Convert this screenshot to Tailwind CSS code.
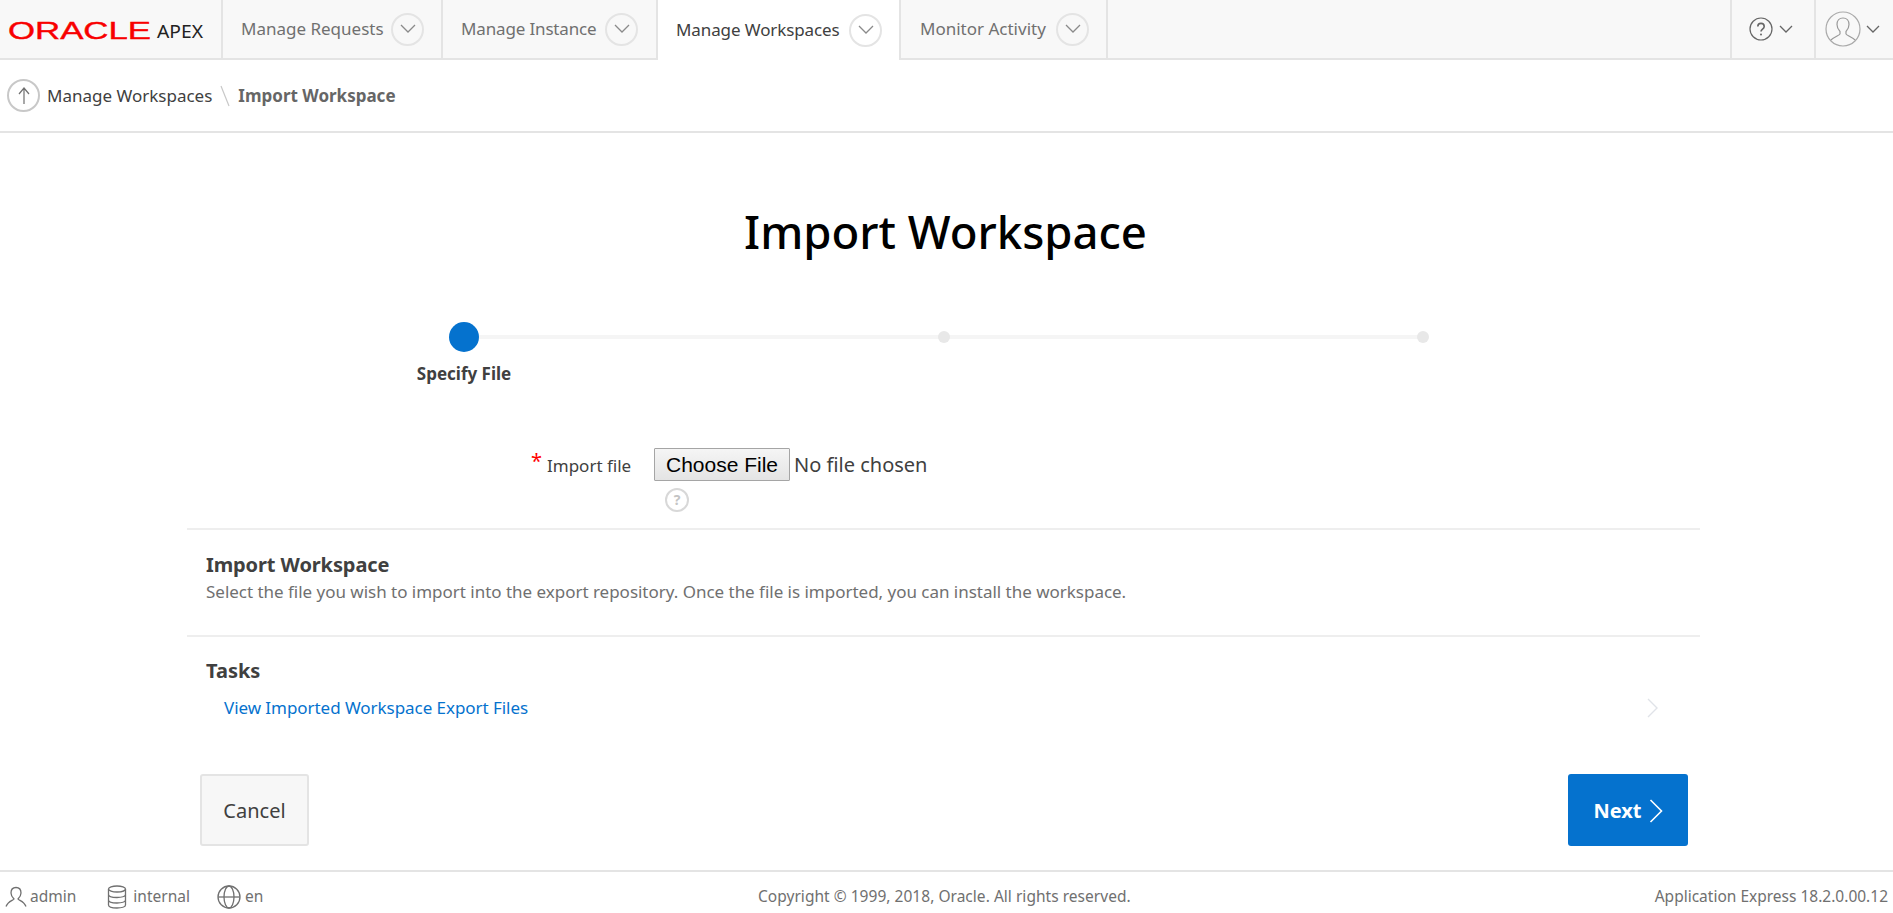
<!DOCTYPE html>
<html lang="en">
<head>
<meta charset="utf-8">
<title>Import Workspace</title>
<script src="https://cdn.jsdelivr.net/npm/@tailwindcss/browser@4"></script>
</head>
<body class="bg-white font-['Noto_Sans',sans-serif] text-[#404040] overflow-hidden">
<div class="flex flex-col h-[913px] w-[1893px]">
  <header class="flex h-[60px] shrink-0 bg-[#f8f8f8] border-b-2 border-[#e4e4e4]">
    <div class="w-[223px] h-[58px] flex items-center border-r-2 border-[#e4e4e4] pl-[8px]">
      <svg width="200" height="30" viewBox="0 0 200 30">
        <text x="0" y="25" font-family="Liberation Sans" font-size="24" fill="#f80000" stroke="#f80000" stroke-width="0.4" textLength="143" lengthAdjust="spacingAndGlyphs">ORACLE</text>
        <text x="149" y="24" font-family="Noto Sans" font-size="18" fill="#222" textLength="46" lengthAdjust="spacingAndGlyphs">APEX</text>
      </svg>
    </div>
    <div class="w-[220px] flex items-center justify-between pl-[18px] pr-[17px] border-r-2 border-[#e4e4e4] text-[#707070] text-[17px]">
      <span>Manage Requests</span>
      <span class="w-[33px] h-[33px] rounded-full border-2 border-[#e4e4e4] flex items-center justify-center"><svg width="16" height="10" viewBox="0 0 16 10" fill="none" stroke="#8a8a8a" stroke-width="1.3"><path d="M1 1l7 7 7-7"/></svg></span>
    </div>
    <div class="w-[213px] flex items-center justify-between pl-[18px] pr-[18px] text-[#707070] text-[17px]">
      <span class="tracking-[-0.15px]">Manage Instance</span>
      <span class="w-[33px] h-[33px] rounded-full border-2 border-[#e4e4e4] flex items-center justify-center"><svg width="16" height="10" viewBox="0 0 16 10" fill="none" stroke="#8a8a8a" stroke-width="1.3"><path d="M1 1l7 7 7-7"/></svg></span>
    </div>
    <div class="w-[245px] h-[60px] bg-white flex items-center justify-between pl-[18px] pr-[17px] border-l-2 border-r-2 border-[#e4e4e4] text-[#404040] text-[17px]">
      <span class="tracking-[-0.1px]">Manage Workspaces</span>
      <span class="w-[33px] h-[33px] rounded-full border-2 border-[#e4e4e4] flex items-center justify-center"><svg width="16" height="10" viewBox="0 0 16 10" fill="none" stroke="#8a8a8a" stroke-width="1.3"><path d="M1 1l7 7 7-7"/></svg></span>
    </div>
    <div class="w-[207px] flex items-center justify-between pl-[19px] pr-[17px] border-r-2 border-[#e4e4e4] text-[#707070] text-[17px]">
      <span>Monitor Activity</span>
      <span class="w-[33px] h-[33px] rounded-full border-2 border-[#e4e4e4] flex items-center justify-center"><svg width="16" height="10" viewBox="0 0 16 10" fill="none" stroke="#8a8a8a" stroke-width="1.3"><path d="M1 1l7 7 7-7"/></svg></span>
    </div>
    <div class="flex-1"></div>
    <div class="w-[86px] flex items-center justify-center gap-[6px] border-l-2 border-r-2 border-[#e4e4e4] pr-[5px]">
      <svg width="24" height="24" viewBox="0 0 24 24" fill="none" stroke="#666" stroke-width="1.2"><circle cx="12" cy="12" r="11"/><path d="M8.800 9.500c0-4.200 6.400-4.200 6.400 0 0 2.600-3.200 2.600-3.200 5" stroke-width="1.600"/><circle cx="12" cy="17.600" r="1" fill="#666" stroke="none"/></svg>
      <svg width="14" height="8" viewBox="0 0 14 8" fill="none" stroke="#666" stroke-width="1.3"><path d="M1 1l6 6 6-6"/></svg>
    </div>
    <div class="w-[77px] flex items-center pl-[9px] gap-[5px]">
      <svg width="36" height="36" viewBox="0 0 36 36" fill="none" stroke="#aaa" stroke-width="1.2"><circle cx="18" cy="18" r="17"/><path d="M18 7c-4 0-6 3-6 6.500 0 3 1.500 5.500 3 7v2.500c0 1-6 3-9 6M18 7c4 0 6 3 6 6.500 0 3-1.500 5.500-3 7v2.500c0 1 6 3 9 6" stroke="#999"/></svg>
      <svg width="14" height="8" viewBox="0 0 14 8" fill="none" stroke="#666" stroke-width="1.3"><path d="M1 1l6 6 6-6"/></svg>
    </div>
  </header>

  <nav class="h-[73px] shrink-0 flex items-center pl-[7px] border-b-2 border-[#e4e4e4] text-[17px]">
    <span class="w-[33px] h-[33px] rounded-full border-2 border-[#c8c8c8] flex items-center justify-center"><svg width="12" height="18" viewBox="0 0 12 18" fill="none" stroke="#707070" stroke-width="1.2"><path d="M6 17V1M1 7l5-6 5 6"/></svg></span>
    <span class="ml-[7px] mt-[1px] text-[#404040]">Manage Workspaces</span>
    <svg class="mx-[8px]" width="10" height="22" viewBox="0 0 10 22" fill="none" stroke="#c8c8c8" stroke-width="1.2"><path d="M1 1l8 20"/></svg>
    <span class="mt-[1px] font-bold text-[#666]">Import Workspace</span>
  </nav>

  <main class="flex-1 flex flex-col min-h-0">
    <h1 class="mt-[64px] pr-[2px] text-center text-[#000] text-[45.5px] leading-[68px] font-medium">Import Workspace</h1>

    <div class="mt-[57px] ml-[399px] w-[1090px] relative h-[66px]">
      <div class="absolute left-[64px] right-[66px] top-[13px] h-[4px] bg-[#f5f5f5]"></div>
      <div class="absolute left-[50px] top-0 w-[30px] h-[30px] rounded-full bg-[#0572ce]"></div>
      <div class="absolute left-[539px] top-[9px] w-[12px] h-[12px] rounded-full bg-[#e8e8e8]"></div>
      <div class="absolute left-[1018px] top-[9px] w-[12px] h-[12px] rounded-full bg-[#e8e8e8]"></div>
      <div class="absolute left-[0px] top-[39px] w-[130px] text-center text-[17px] font-bold text-[#404040]">Specify File</div>
    </div>

    <div class="mt-[60px] flex items-start pl-[530px]">
      <label class="relative text-[#404040] text-[17px] w-[124px] pt-[5px] pl-[17px]"><span class="absolute left-[1px] top-[1px] text-[#f00] text-[20px] leading-[24px]">*</span>Import file</label>
      <div class="flex flex-col items-start">
        <input type="file" class="w-[320px] h-[33px] text-[20px] text-[#404040] file:h-[33px] file:w-[136px] file:mr-[4px] file:px-0 file:border file:border-solid file:border-[#a5a5a5] file:rounded-[1px] file:bg-[linear-gradient(#f5f5f5,#e4e4e4)] file:text-[#000] file:text-[21px] file:font-['Liberation_Sans',sans-serif]">
        <span class="mt-[7px] ml-[11px] w-[24px] h-[24px] rounded-full border-2 border-[#d8d8d8] flex items-center justify-center text-[#c4c4c4] text-[14px] font-bold leading-none">?</span>
      </div>
    </div>

    <section class="mt-[16px] mx-[187px] w-[1513px] h-[107px] border-t-2 border-[#eeeeee] px-[19px] pt-[21px]">
      <h2 class="text-[20px] leading-[28px] font-bold text-[#404040] tracking-[-0.1px]">Import Workspace</h2>
      <p class="mt-[1px] text-[17px] leading-[24px] text-[#707070] tracking-[-0.02px]">Select the file you wish to import into the export repository. Once the file is imported, you can install the workspace.</p>
    </section>

    <section class="mx-[187px] w-[1513px] border-t-2 border-[#eeeeee] px-[19px] pt-[20px]">
      <h2 class="text-[20px] leading-[28px] font-bold text-[#404040]">Tasks</h2>
      <div class="mt-[11px] pl-[18px] pr-[22px] flex items-center justify-between text-[17px] leading-[24px] text-[#0572ce]">
        <a class="tracking-[-0.05px]">View Imported Workspace Export Files</a>
        <svg width="12" height="20" viewBox="0 0 12 20" fill="none" stroke="#e0e3e8" stroke-width="1.4"><path d="M1 1l9 9-9 9"/></svg>
      </div>
    </section>

    <div class="mt-[54px] mx-[200px] w-[1488px] flex justify-between">
      <button class="w-[109px] h-[72px] pt-[2px] bg-[#f7f7f7] border-2 border-[#e4e4e4] rounded-[3px] text-[20px] text-[#404040]">Cancel</button>
      <button class="w-[120px] h-[72px] pt-[1px] bg-[#0572ce] rounded-[3px] text-white text-[20px] font-bold flex items-center justify-center gap-[7px]">Next<svg width="14" height="24" viewBox="0 0 14 24" fill="none" stroke="#fff" stroke-width="1.6"><path d="M1.500 1l11 11-11 11"/></svg></button>
    </div>
  </main>

  <footer class="h-[43px] shrink-0 border-t-2 border-[#e4e4e4] relative flex items-center justify-between pl-[5px] pr-[5px] pt-[8px] text-[15.5px] text-[#707070]">
    <div class="flex items-center">
      <svg width="22" height="22" viewBox="0 0 22 22" fill="none" stroke="#707070" stroke-width="1.3"><path d="M11 1.500c-3.500 0-5 2.500-5 5.500s2 5 3 6c-1 1.500-6 2-8 7.500M11 1.500c3.500 0 5 2.500 5 5.500s-2 5-3 6c1 1.500 6 2 8 7.500"/></svg>
      <span class="ml-[3px]">admin</span>
      <svg class="ml-[31px]" width="20" height="24" viewBox="0 0 20 24" fill="none" stroke="#707070" stroke-width="1.3"><ellipse cx="10" cy="4" rx="8.500" ry="3"/><path d="M1.500 4v16c0 4 17 4 17 0V4M1.500 9.500c0 4 17 4 17 0M1.500 15c0 4 17 4 17 0"/></svg>
      <span class="ml-[6px]">internal</span>
      <svg class="ml-[27px]" width="24" height="24" viewBox="0 0 24 24" fill="none" stroke="#707070" stroke-width="1.3"><circle cx="12" cy="12" r="11"/><ellipse cx="12" cy="12" rx="5" ry="11"/><path d="M1 12h22"/></svg>
      <span class="ml-[4px]">en</span>
    </div>
    <span class="absolute left-[758px] tracking-[0.03px]">Copyright © 1999, 2018, Oracle. All rights reserved.</span>
    <span>Application Express 18.2.0.00.12</span>
  </footer>
</div>
</body>
</html>
